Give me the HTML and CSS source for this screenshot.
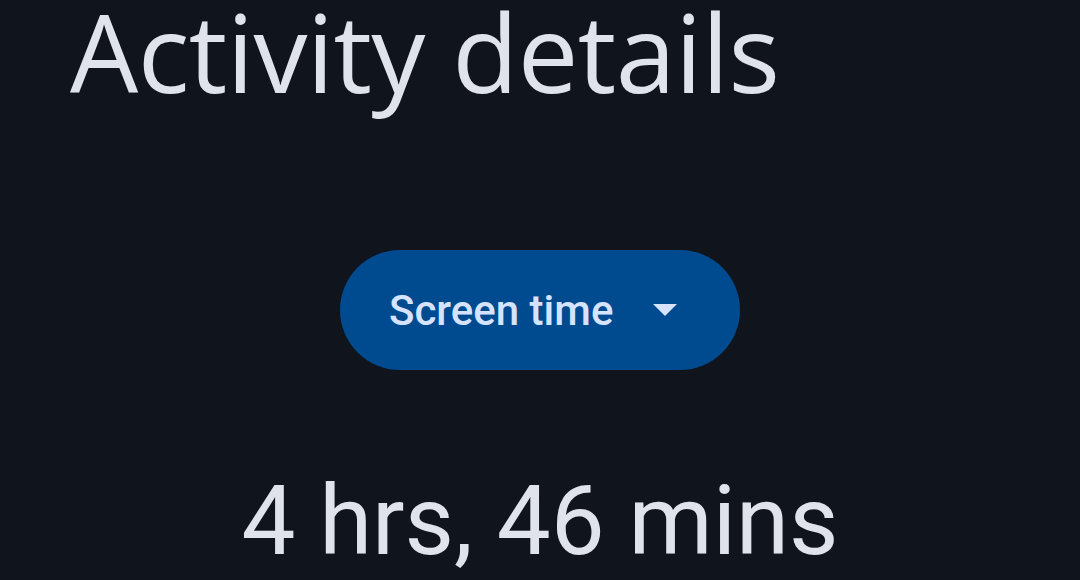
FILE: index.html
```html
<!DOCTYPE html>
<html>
<head>
<meta charset="utf-8">
<link rel="stylesheet" href="styles.css">
</head>
<body>
<div class="page">
  <h1 class="title">Activity details</h1>
  <div class="center">
    <button class="chip">
      <span class="chip-label">Screen time</span>
      <svg class="caret" width="24" height="12" viewBox="0 0 24 12"><path d="M0 0 L24 0 L12 12 Z" fill="#d6e3ff"/></svg>
    </button>
  </div>
  <div class="total">4 hrs, 46 mins</div>
</div>
</body>
</html>
```
FILE: styles.css
```css
html, body {
  margin: 0;
  padding: 0;
  background: #10141c;
}
.page {
  width: 1080px;
  height: 580px;
  display: flex;
  flex-direction: column;
  color: #e0e2ec;
}
.title {
  margin: 0;
  padding: 2px 0 0 70px;
  font-family: "Open Sans", sans-serif;
  font-weight: 400;
  font-size: 108px;
  line-height: 100px;
  letter-spacing: -0.6px;
}
.center {
  display: flex;
  justify-content: center;
  margin-top: 148px;
}
.chip {
  width: 400px;
  height: 120px;
  border: none;
  border-radius: 60px;
  background: #004a8f;
  display: flex;
  align-items: center;
  padding: 0 0 0 49px;
  cursor: pointer;
}
.chip-label {
  font-family: Roboto, sans-serif;
  font-weight: 500;
  font-size: 42px;
  color: #d6e3ff;
}
.caret {
  margin-left: 40px;
}
.total {
  text-align: center;
  font-family: Roboto, sans-serif;
  font-size: 96px;
  line-height: 110px;
  margin-top: 96px;
}
```
